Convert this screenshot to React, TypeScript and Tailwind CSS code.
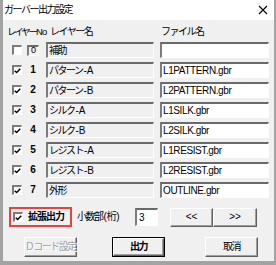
import React from "react";

const FONT = "font-['Liberation_Sans','Noto_Sans_CJK_JP',sans-serif]";

function T({ s }: { s: string }) {
  const parts = s.match(/[\x00-\x7f]+|[^\x00-\x7f]+/g) || [];
  return (
    <>
      {parts.map((p, i) =>
        /^[\x00-\x7f]+$/.test(p) ? (
          <span key={i} className="tracking-[-0.2px] pl-[1px]">{p}</span>
        ) : (
          <span key={i}>{p}</span>
        )
      )}
    </>
  );
}

function Check({ checked }: { checked: boolean }) {
  return (
    <div className="w-[10px] h-[10px] border-t-2 border-l-2 border-t-[#7a7a7a] border-l-[#7a7a7a] border-r border-b border-r-white border-b-white bg-white flex items-center justify-center shrink-0">
      {checked && (
        <svg width="8" height="8" viewBox="0 0 8 8">
          <path d="M0.8 3.6 L3 5.8 L7.2 1.4" stroke="#000" strokeWidth="1.6" fill="none" />
        </svg>
      )}
    </div>
  );
}

const rows = [
  { n: "0", name: "補助", file: "", checked: false },
  { n: "1", name: "パターン-A", file: "L1PATTERN.gbr", checked: true },
  { n: "2", name: "パターン-B", file: "L2PATTERN.gbr", checked: true },
  { n: "3", name: "シルク-A", file: "L1SILK.gbr", checked: true },
  { n: "4", name: "シルク-B", file: "L2SILK.gbr", checked: true },
  { n: "5", name: "レジスト-A", file: "L1RESIST.gbr", checked: true },
  { n: "6", name: "レジスト-B", file: "L2RESIST.gbr", checked: true },
  { n: "7", name: "外形", file: "OUTLINE.gbr", checked: true },
];

const sunken =
  "border-t-2 border-l-2 border-t-[#6a6a6a] border-l-[#7c7c7c] border-r border-b border-r-white border-b-white";

const raised =
  "border border-t-white border-l-white border-r-[#5f5f5f] border-b-[#5f5f5f] shadow-[inset_-1px_-1px_0_#a0a0a0] bg-[#f0f0f0] flex items-center justify-center whitespace-nowrap";

export default function App() {
  return (
    <div className={`w-[276px] h-[265px] bg-[#a3a3a3] pl-[3px] pr-[2px] pb-[4px] flex flex-col ${FONT} text-[10px] text-black tracking-[-1.5px] leading-none whitespace-nowrap`}>
      <div className="h-[20px] bg-white flex items-center justify-between pl-[1px] pr-[6px] shrink-0">
        <span>ガーバー出力設定</span>
        <svg width="10" height="10" viewBox="0 0 10 10">
          <path d="M1 1 L9 9 M9 1 L1 9" stroke="#000" strokeWidth="1.1" />
        </svg>
      </div>
      <div className="flex-1 bg-[#f0f0f0] flex flex-col pt-[4px]">
        <div className="h-[16px] flex items-center">
          <span className="ml-[4px] w-[43px] text-[9.5px] tracking-[-2.2px]">レイヤー<span className="tracking-[-0.8px]">No</span></span>
          <span className="w-[111px]">レイヤー名</span>
          <span>ファイル名</span>
        </div>
        {rows.map((r) => (
          <div key={r.n} className="h-[20px] flex items-center">
            <div className="w-[9px]" />
            <Check checked={r.checked} />
            <div className="w-[24px] flex items-center justify-center tracking-normal">
              {r.n === "0" ? (
                <div className={`w-[12px] h-[11px] ${sunken} flex items-center justify-center text-[9px] ml-[-2px]`}>0</div>
              ) : (
                <span className="font-bold text-[10px] ml-[-2px]">{r.n}</span>
              )}
            </div>
            <div className={`w-[108px] h-[16px] ${sunken} bg-[#f0f0f0] flex items-center pl-[1px]`}>
              <T s={r.name} />
            </div>
            <div className="w-[6px]" />
            <div className={`w-[109px] h-[16px] ${sunken} bg-white flex items-center pl-[1px] tracking-[-0.4px]`}>
              {r.file}
            </div>
          </div>
        ))}
        <div className="mt-[7px] h-[20px] flex items-center">
          <div className="ml-[6px] w-[63px] h-[20px] border-2 border-[#e3443f] flex items-center pl-[2px]">
            <Check checked={true} />
            <span className="ml-[5px] font-bold tracking-[-1px]">拡張出力</span>
          </div>
          <span className="ml-[5px] w-[58px]"><T s="小数部(桁)" /></span>
          <div className={`w-[23px] h-[18px] ${sunken} bg-white flex items-center pl-[2px]`}>3</div>
          <div className="w-[12px]" />
          <div className={`w-[43px] h-[19px] ${raised} tracking-normal`}>&lt;&lt;</div>
          <div className={`w-[44px] h-[19px] ${raised} tracking-normal`}>&gt;&gt;</div>
        </div>
        <div className="mt-[10px] h-[20px] flex items-center">
          <div className={`ml-[21px] w-[53px] h-[20px] ${raised} text-[#a0a0a0] [text-shadow:1px_1px_0_#fff]`}><T s="Dコード設定" /></div>
          <div className="ml-[35px] w-[53px] h-[20px] border border-black flex">
            <div className={`flex-1 ${raised} font-bold`}>出力</div>
          </div>
          <div className={`ml-[40px] w-[53px] h-[20px] ${raised}`}>取消</div>
        </div>
      </div>
    </div>
  );
}
